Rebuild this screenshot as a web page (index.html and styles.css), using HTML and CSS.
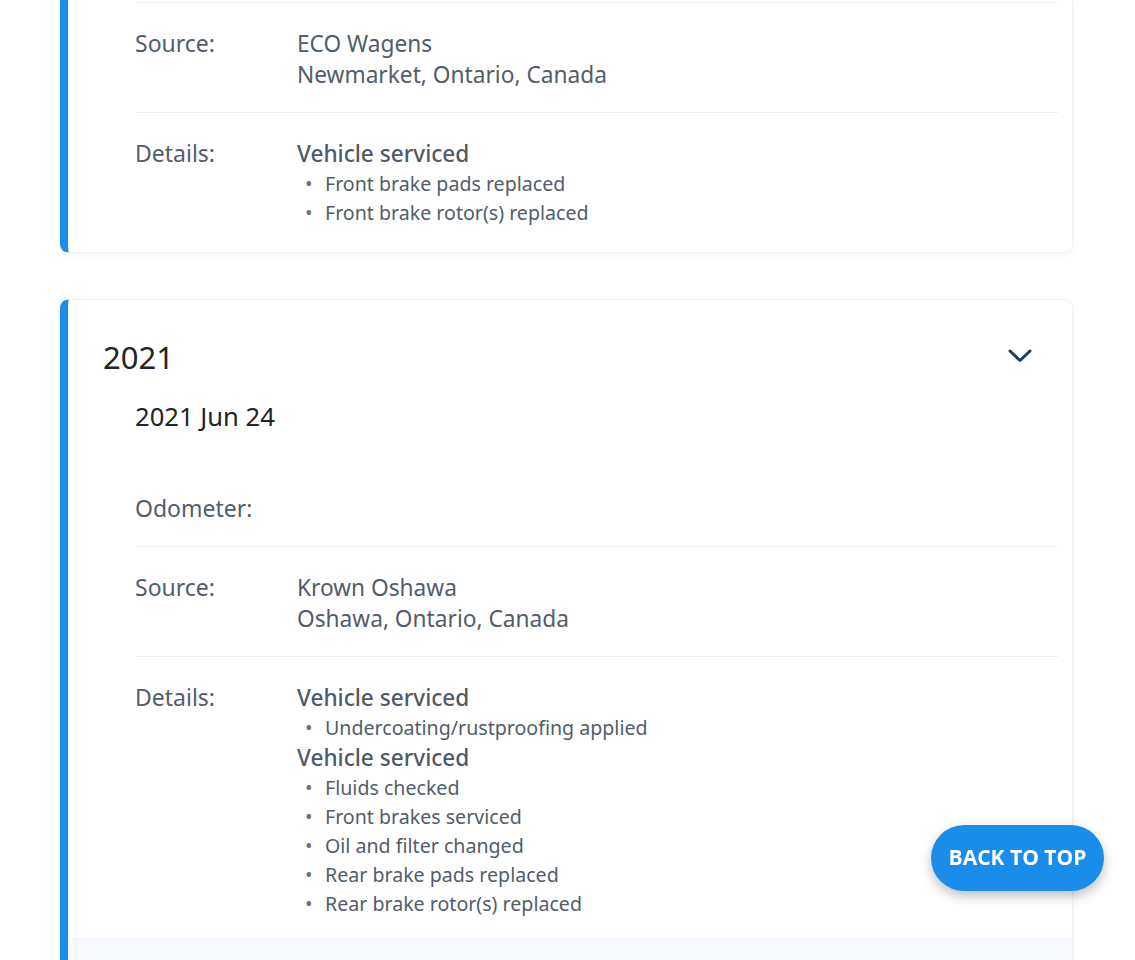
FILE: index.html
```html
<!DOCTYPE html>
<html lang="en">
<head>
<meta charset="utf-8">
<title>Vehicle history</title>
<link rel="stylesheet" href="styles.css">
</head>
<body>
<main class="page">
  <section class="card card-continued">
    <div class="row">
      <div class="label">Source:</div>
      <div class="value">
        <div class="line">ECO Wagens</div>
        <div class="line">Newmarket, Ontario, Canada</div>
      </div>
    </div>
    <div class="row row-last">
      <div class="label">Details:</div>
      <div class="value">
        <div class="service-title">Vehicle serviced</div>
        <ul class="items">
          <li>Front brake pads replaced</li>
          <li>Front brake rotor(s) replaced</li>
        </ul>
      </div>
    </div>
  </section>

  <section class="card">
    <header class="card-head">
      <h2 class="year">2021</h2>
      <svg class="chevron" width="26" height="16" viewBox="0 0 26 16" aria-hidden="true">
        <path d="M3 3 L13 12.5 L23 3" fill="none" stroke="#1b3a66" stroke-width="3" stroke-linecap="round" stroke-linejoin="round"/>
      </svg>
    </header>
    <div class="entry">
      <div class="date">2021 Jun 24</div>
      <div class="row row-first">
        <div class="label">Odometer:</div>
        <div class="value"></div>
      </div>
      <div class="row">
        <div class="label">Source:</div>
        <div class="value">
          <div class="line">Krown Oshawa</div>
          <div class="line">Oshawa, Ontario, Canada</div>
        </div>
      </div>
      <div class="row row-last">
        <div class="label">Details:</div>
        <div class="value">
          <div class="service-title">Vehicle serviced</div>
          <ul class="items">
            <li>Undercoating/rustproofing applied</li>
          </ul>
          <div class="service-title">Vehicle serviced</div>
          <ul class="items">
            <li>Fluids checked</li>
            <li>Front brakes serviced</li>
            <li>Oil and filter changed</li>
            <li>Rear brake pads replaced</li>
            <li>Rear brake rotor(s) replaced</li>
          </ul>
        </div>
      </div>
    </div>
    <div class="entry-band"></div>
  </section>
</main>
<a class="back-top" href="#">BACK TO TOP</a>
</body>
</html>
```

FILE: styles.css
```css
* { box-sizing: border-box; }

html, body {
  margin: 0;
  padding: 0;
  background: #ffffff;
}

body {
  font-family: "Noto Sans", "Open Sans", sans-serif;
  color: #525d69;
}

.page {
  padding: 0 62px 0 60px;
  width: 1135px;
}

.card {
  background: #ffffff;
  border: 1px solid #eef0f3;
  border-left: 8px solid #1a8deb;
  border-radius: 9px;
  box-shadow: 0 2px 6px rgba(20, 40, 80, 0.05);
  margin-bottom: 46px;
  overflow: hidden;
}

.card-continued {
  border-top: none;
  border-top-left-radius: 0;
  border-top-right-radius: 0;
  padding: 2px 14px 3px 67px;
}

.row {
  display: flex;
  border-top: 1px solid #eef0f3;
  padding: 25px 0 22px;
}

.row-first {
  border-top: none;
}

.label {
  width: 162px;
  flex: none;
  font-size: 23px;
  line-height: 31px;
  color: #525d69;
}

.value {
  flex: 1;
  font-size: 22.7px;
  line-height: 31px;
  color: #525d69;
}

.service-title {
  font-size: 22.6px;
  line-height: 31px;
  font-weight: 500;
  color: #4f5a66;
}

.items {
  list-style: none;
  margin: 0;
  padding: 0;
}

.items li {
  position: relative;
  padding-left: 28px;
  font-size: 19.6px;
  line-height: 29px;
  color: #525d69;
}

.items li::before {
  content: "•";
  position: absolute;
  left: 8px;
  top: 0;
  font-size: 20px;
  color: #6b7580;
}

.card-head {
  display: flex;
  justify-content: space-between;
  align-items: center;
  padding: 37px 39px 0 35px;
}

.year {
  margin: 0;
  font-size: 31px;
  line-height: 40px;
  font-weight: 400;
  color: #222426;
}

.chevron {
  display: block;
  margin-top: -3px;
}

.entry {
  padding: 24px 14px 0 67px;
}

.date {
  font-size: 25.6px;
  line-height: 32px;
  color: #222426;
  margin-bottom: 35px;
}

.entry .row-last {
  padding-bottom: 19px;
}

.entry-band {
  height: 40px;
  background: #f6f9fd;
}

.back-top {
  position: fixed;
  right: 31px;
  bottom: 69px;
  width: 173px;
  height: 66px;
  border-radius: 33px;
  background: #1a8deb;
  color: #ffffff;
  font-family: "Open Sans", "Noto Sans", sans-serif;
  font-weight: 700;
  font-size: 21px;
  padding-bottom: 3px;
  display: flex;
  align-items: center;
  justify-content: center;
  text-decoration: none;
  box-shadow: 0 5px 12px rgba(0, 0, 0, 0.25);
}
```
